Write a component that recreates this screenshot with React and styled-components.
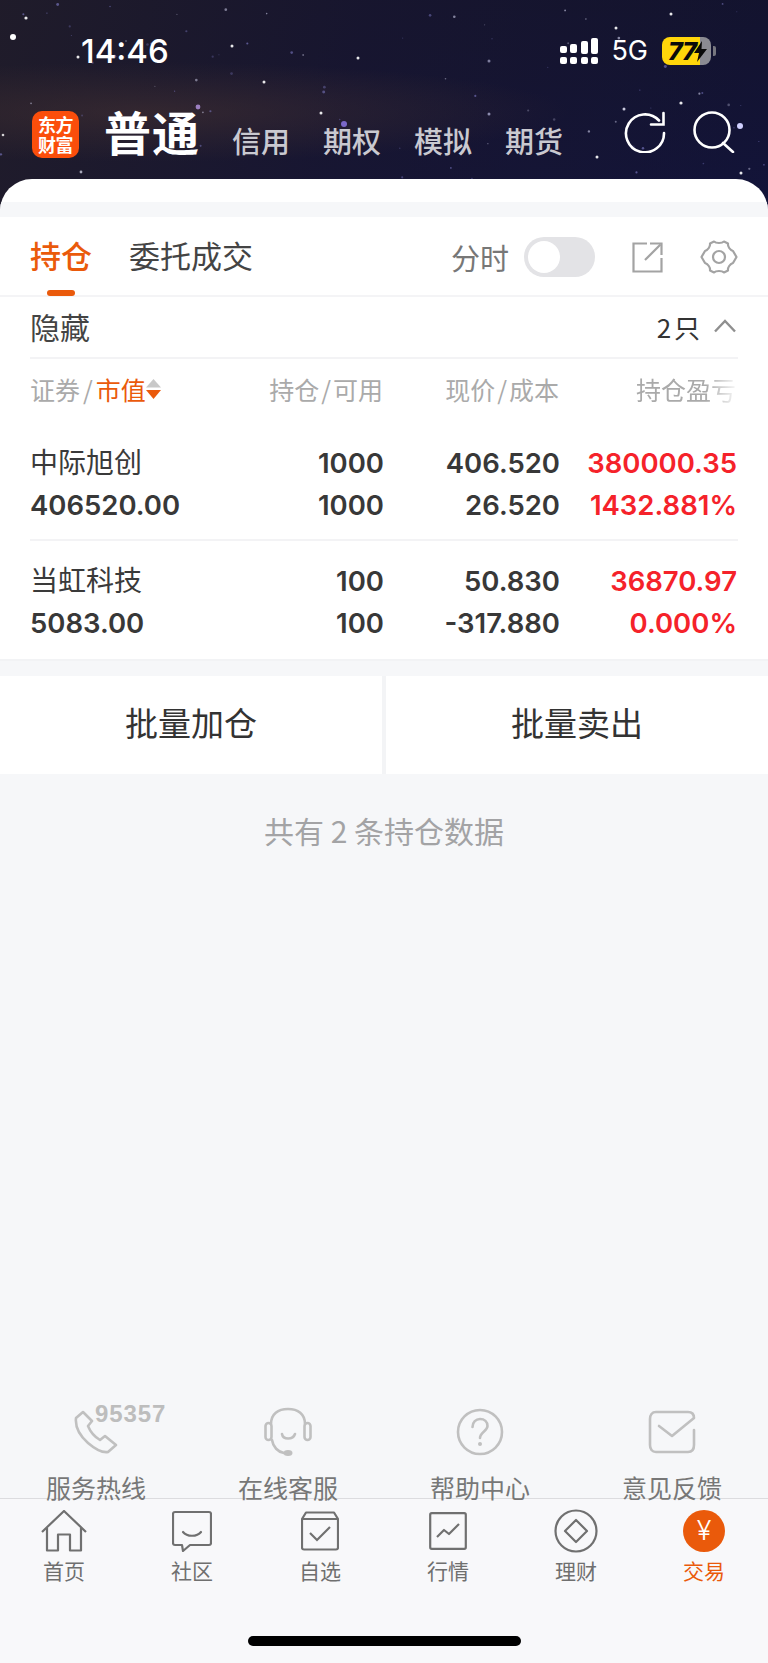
import React from 'react'
import styled, { createGlobalStyle } from 'styled-components'

const Global = createGlobalStyle`
  html, body { margin: 0; padding: 0; background: #f6f7f9; }
  body { font-family: "Noto Sans CJK SC", "Noto Sans", sans-serif; }
  * { box-sizing: border-box; }
`

const CJK = `"Noto Sans CJK SC", "Noto Sans", sans-serif`
const NUM = `Inter, ${CJK}`

// fixed star field for the header picture
const makeStars = () => {
  let seed = 46
  const rnd = () => {
    seed = (seed * 16807) % 2147483647
    return seed / 2147483647
  }
  const list = []
  for (let i = 0; i < 80; i++) {
    const lilac = rnd() > 0.35
    list.push({
      x: rnd() * 768,
      y: rnd() * 180,
      r: 0.5 + rnd() * 1,
      c: lilac ? '#7f7cc8' : '#c8c8e4',
      o: 0.25 + rnd() * 0.4,
    })
  }
  return list
}
const stars = [
  ...makeStars(),
  { x: 13, y: 37, r: 3, c: '#fff', o: 1 },
  { x: 26, y: 18, r: 1.6, c: '#fff', o: 0.9 },
  { x: 78, y: 57, r: 1.5, c: '#fff', o: 0.9 },
  { x: 232, y: 46, r: 1.5, c: '#fff', o: 0.9 },
  { x: 264, y: 82, r: 1.5, c: '#fff', o: 0.9 },
  { x: 358, y: 58, r: 1.5, c: '#fff', o: 0.9 },
  { x: 321, y: 113, r: 1.5, c: '#fff', o: 0.9 },
  { x: 198, y: 107, r: 2.4, c: '#a78ad0', o: 0.9 },
  { x: 344, y: 124, r: 3, c: '#8470d8', o: 0.9 },
  { x: 81, y: 172, r: 1.4, c: '#ccd', o: 0.8 },
  { x: 3, y: 135, r: 1.3, c: '#fff', o: 0.8 },
  { x: 671, y: 14, r: 1.5, c: '#fff', o: 0.9 },
  { x: 616, y: 28, r: 1.5, c: '#fff', o: 0.9 },
  { x: 681, y: 103, r: 1.6, c: '#fff', o: 0.9 },
  { x: 624, y: 109, r: 1.5, c: '#dde', o: 0.9 },
  { x: 740, y: 126, r: 3, c: '#d0d0ff', o: 1 },
  { x: 597, y: 157, r: 1.5, c: '#fff', o: 0.9 },
  { x: 741, y: 173, r: 1.5, c: '#fff', o: 0.9 },
  { x: 489, y: 61, r: 1.5, c: '#88a', o: 0.9 },
  { x: 489, y: 114, r: 1.5, c: '#99b', o: 0.9 },
]

const Page = styled.div`
  position: relative;
  width: 768px;
  height: 1663px;
  overflow: hidden;
  display: flex;
  flex-direction: column;
  background: #f6f7f9;
`

const Header = styled.header`
  position: relative;
  height: 209px;
  flex: none;
  overflow: hidden;
  background:
    radial-gradient(ellipse 420px 50px at 150px 112px, rgba(70, 50, 50, 0.55), transparent),
    linear-gradient(100deg, rgba(32, 28, 42, 0.95) 0%, rgba(24, 22, 48, 0.7) 45%, rgba(13, 17, 58, 0.3) 100%),
    linear-gradient(180deg, #15142a 0%, #15153a 100%);
`

const StarField = styled.svg`
  position: absolute;
  left: 0;
  top: 0;
`

const StatusBar = styled.div`
  position: relative;
  height: 104px;
  padding: 32px 52px 0 81px;
  display: flex;
  justify-content: space-between;
  align-items: flex-start;
  color: #fff;
`

const Clock = styled.span`
  font-family: ${NUM};
  font-size: 33px;
  font-weight: 500;
  line-height: 38px;
`

const StatusRight = styled.div`
  display: flex;
  align-items: center;
  height: 38px;
`

const Net = styled.span`
  font-family: ${NUM};
  font-size: 27px;
  line-height: 38px;
  margin: 0 14px 0 13px;
`

const Battery = styled.div`
  position: relative;
  width: 49px;
  height: 28px;
  border-radius: 8px;
  overflow: hidden;
  background: linear-gradient(90deg, #ffd60a 0 78%, #8b8b92 78% 100%);
  color: #0a0a0a;
  font-family: ${NUM};
  font-size: 25px;
  font-weight: 800;
  font-style: italic;
  line-height: 28px;
  padding-left: 6px;
  letter-spacing: -1px;
`

const Bolt = styled.svg`
  position: absolute;
  right: 4px;
  top: 4px;
`

const Nub = styled.div`
  width: 3px;
  height: 10px;
  margin-left: 2px;
  border-radius: 0 2px 2px 0;
  background: #77777f;
`

const NavBar = styled.div`
  position: relative;
  display: flex;
  align-items: flex-end;
  padding-left: 32px;
  height: 54px;
`

const Logo = styled.div`
  width: 47px;
  height: 47px;
  margin: 0 25px 0 0;
  border-radius: 10px;
  background: #fb4e0b;
  color: #fff;
  font-size: 18px;
  font-weight: 700;
  line-height: 20px;
  text-align: center;
  padding-top: 3px;
  letter-spacing: -0.5px;
`

const Mode = styled.span`
  color: #fff;
  font-size: 47px;
  font-weight: 700;
  line-height: 54px;
  letter-spacing: 1px;
  margin-right: 32px;
`

const NavLink = styled.span`
  color: #c9c9d0;
  font-size: 29px;
  font-weight: 500;
  line-height: 40px;
  margin-right: 33px;
  margin-bottom: -2px;
`

const NavIcons = styled.div`
  position: absolute;
  right: 33px;
  top: 7px;
  display: flex;
  gap: 27px;
`

const Card = styled.main`
  position: relative;
  flex: 1;
  margin-top: -30px;
  border-radius: 32px 32px 0 0;
  padding-top: 23px;
  background: #fff;
  display: flex;
  flex-direction: column;
  overflow: hidden;
`

const Gap = styled.div`
  flex: none;
  height: ${(p) => p.$h}px;
  background: #f6f7f9;
`

const TabBar = styled.div`
  flex: none;
  height: 80px;
  padding: 0 30px;
  background: #fff;
  border-bottom: 2px solid #f4f4f6;
  display: flex;
  align-items: center;
`

const TopTab = styled.span`
  position: relative;
  font-size: 31px;
  line-height: 40px;
  margin: 0 37px 3px 0;
  font-weight: ${(p) => (p.$on ? 500 : 400)};
  color: ${(p) => (p.$on ? '#ea5a0b' : '#444')};

  ${(p) =>
    p.$on &&
    `&::after {
      content: '';
      position: absolute;
      left: 17px;
      bottom: -21px;
      width: 28px;
      height: 6px;
      border-radius: 3px;
      background: #ea5a0b;
    }`}
`

const TabTools = styled.div`
  margin-left: auto;
  padding-top: 2px;
  display: flex;
  align-items: center;
`

const ToolLabel = styled.span`
  font-size: 29px;
  line-height: 40px;
  color: #777;
`

const Toggle = styled.div`
  width: 71px;
  height: 40px;
  margin: 0 37px 0 15px;
  padding: 4px;
  border-radius: 20px;
  background: #e3e3e6;
`

const Knob = styled.div`
  width: 32px;
  height: 32px;
  border-radius: 50%;
  background: #fff;
`

const ToolIcons = styled.div`
  display: flex;
  align-items: center;
  gap: 37px;
`

const Holdings = styled.section`
  flex: none;
  padding: 0 30px;
  background: #fff;
  border-bottom: 2px solid #f2f3f5;
`

const Fold = styled.div`
  height: 62px;
  padding-bottom: 2px;
  display: flex;
  align-items: center;
  justify-content: space-between;
  border-bottom: 2px solid #f3f3f5;
  font-size: 30px;
  color: #444;
`

const FoldRight = styled.div`
  display: flex;
  align-items: center;
  gap: 14px;
  font-size: 26px;
  word-spacing: -3px;
  color: #333;
  padding-right: 2px;
`

const Grid = styled.div`
  display: grid;
  grid-template-columns: 200px 153px 176px 177px;
  align-items: center;
`

const ColHead = styled(Grid)`
  height: 66px;
  padding-bottom: 6px;
  font-size: 25px;
  color: #aaa;
`

const ColCell = styled.div`
  display: flex;
  align-items: center;
  white-space: nowrap;
  justify-content: ${(p) => (p.$first ? 'flex-start' : 'flex-end')};
`

const Fade = styled.span`
  -webkit-mask-image: linear-gradient(90deg, #000 70%, rgba(0, 0, 0, 0.1) 100%);
  mask-image: linear-gradient(90deg, #000 70%, rgba(0, 0, 0, 0.1) 100%);
`

const Slash = styled.span`
  margin: 0 ${(p) => (p.$tight ? 2 : 3)}px;
`

const Sorted = styled.span`
  color: #ea5a0b;
`

const Row = styled(Grid)`
  grid-template-columns: 201px 153px 176px 177px;
  height: ${(p) => (p.$last ? 118 : 116)}px;
  padding-top: ${(p) => (p.$last ? 19 : 17)}px;
  align-content: start;
  row-gap: 0;
  border-bottom: ${(p) => (p.$last ? 'none' : '2px solid #f3f3f5')};
`

const Cell = styled.div`
  font-family: ${NUM};
  font-size: 27.5px;
  font-weight: 600;
  line-height: 42px;
  text-align: ${(p) => (p.$first ? 'left' : 'right')};
  color: ${(p) => (p.$red ? '#f5222a' : '#383838')};
`

const StockName = styled.div`
  font-size: 28px;
  line-height: 38px;
  margin-bottom: 4px;
  color: #3a3a3a;
`

const Batch = styled.div`
  flex: none;
  height: 98px;
  display: grid;
  grid-template-columns: 382px 382px;
  column-gap: 4px;
  background: #f3f4f6;
`

const BatchButton = styled.div`
  background: #fff;
  padding-bottom: 6px;
  display: flex;
  align-items: center;
  justify-content: center;
  font-size: 33px;
  color: #333;
`

const Summary = styled.div`
  flex: 1;
  background: #f6f7f9;
  padding-top: 34px;
  text-align: center;
  font-size: 30px;
  line-height: 44px;
  color: #a3a3a5;
`

const HelpRow = styled.div`
  flex: none;
  height: 100px;
  display: grid;
  grid-template-columns: repeat(4, 1fr);
  background: #f6f7f9;
`

const HelpItem = styled.div`
  position: relative;
  height: 100px;
  display: flex;
  flex-direction: column;
  align-items: center;
  padding-top: 8px;
`

const HelpIcon = styled.div`
  flex: none;
  height: 52px;
  display: flex;
  align-items: center;
  justify-content: center;
`

const HelpLabel = styled.span`
  flex: none;
  margin-top: 18px;
  font-size: 25px;
  line-height: 22px;
  color: #777;
`

const Hotline = styled.span`
  position: absolute;
  left: 95px;
  top: 4px;
  font-family: "Liberation Sans", sans-serif;
  font-size: 24px;
  font-weight: 700;
  line-height: 24px;
  letter-spacing: 0.9px;
  color: #bdbdbd;
`

const BottomNav = styled.nav`
  flex: none;
  height: 165px;
  background: #f8f8fa;
  border-top: 1px solid #dcdcdf;
  display: grid;
  grid-template-columns: repeat(6, 1fr);
  align-content: start;
  padding-top: 9px;
`

const NavItem = styled.div`
  display: flex;
  flex-direction: column;
  align-items: center;
  font-size: 21px;
  line-height: 28px;
  color: ${(p) => (p.$on ? '#ea5a0b' : '#6f6f6f')};
`

const NavIcon = styled.div`
  height: 46px;
  margin-bottom: 2px;
  display: flex;
  align-items: center;
  justify-content: center;
`

const HomeBar = styled.div`
  position: absolute;
  left: 248px;
  bottom: 17px;
  width: 273px;
  height: 10px;
  border-radius: 5px;
  background: #000;
`

const Coin = styled.div`
  width: 42px;
  height: 42px;
  border-radius: 50%;
  background: #ea5a0b;
  color: #fff;
  font-family: ${NUM};
  font-size: 27px;
  font-weight: 300;
  line-height: 42px;
  text-align: center;
`

const Signal = () => (
  <svg width="38" height="28" viewBox="0 0 38 28" fill="#fff">
    <rect x="0" y="20" width="7" height="7" rx="2" />
    <rect x="10" y="20" width="7" height="7" rx="2" />
    <rect x="21" y="20" width="7" height="7" rx="2" />
    <rect x="31" y="20" width="7" height="7" rx="2" />
    <rect x="0" y="9" width="7" height="7" rx="2" />
    <rect x="10" y="7" width="7" height="9" rx="2" />
    <rect x="21" y="4" width="7" height="13" rx="2" />
    <rect x="31" y="1" width="7" height="16" rx="2" />
  </svg>
)

const RefreshIcon = () => (
  <svg width="42" height="42" viewBox="0 0 42 42" fill="none" stroke="#fff" strokeWidth="2.6" strokeLinecap="round">
    <path d="M35 9.5A19 19 0 1 0 40 22" />
    <path d="M27 13.5H39.5V2" strokeLinejoin="miter" />
  </svg>
)

const SearchIcon = () => (
  <svg width="42" height="42" viewBox="0 0 42 42" fill="none" stroke="#fff" strokeWidth="2.6" strokeLinecap="round">
    <circle cx="19" cy="19" r="17.5" />
    <path d="M30 32L40 41" />
  </svg>
)

const ShareIcon = () => (
  <svg width="31" height="31" viewBox="0 0 31 31" fill="none" stroke="#a3a3a3" strokeWidth="2.2">
    <path d="M15 1.5H1.5V29.5H29.5V16" />
    <path d="M13 18L28.5 2.5" />
    <path d="M18 1.5H29.5V13" />
  </svg>
)

const GearIcon = () => (
  <svg width="38" height="38" viewBox="0 0 38 38" fill="none" stroke="#a3a3a3" strokeWidth="2.2" strokeLinejoin="round">
    <path d="M14 3.5C16 5.5 22 5.5 24 3.5L28 5.5C27.5 8.5 30 12 33 13L36.5 19L33 25C30 26 27.5 29.5 28 32.5L24 34.5C22 32.5 16 32.5 14 34.5L10 32.5C10.5 29.5 8 26 5 25L1.5 19L5 13C8 12 10.5 8.5 10 5.5Z" />
    <circle cx="19" cy="19" r="6" />
  </svg>
)

const Chevron = () => (
  <svg width="22" height="14" viewBox="0 0 22 14" fill="none" stroke="#8f8f8f" strokeWidth="2.4">
    <path d="M1 12.5L11 2L21 12.5" />
  </svg>
)

const SortArrows = () => (
  <svg width="15" height="20" viewBox="0 0 15 20">
    <path d="M7.5 0L15 8.5H0Z" fill="#c8c8c8" />
    <path d="M0 11H15L7.5 20Z" fill="#ea5a0b" />
  </svg>
)

const PhoneIcon = () => (
  <svg width="44" height="44" viewBox="0 0 44 44" fill="none" stroke="#c0c0c0" strokeWidth="2.6" strokeLinejoin="round">
    <path d="M9 2L2 8C1 17 6 26 14 33C21 39 28 43 34 42L42 35L31 26L26 30C21 27 16 21 14 16L18 11Z" />
  </svg>
)

const HeadsetIcon = () => (
  <svg width="48" height="50" viewBox="0 0 48 50" fill="none" stroke="#c0c0c0" strokeWidth="2.6" strokeLinecap="round">
    <path d="M7 17C7 7 14 2 24 2C34 2 41 7 41 17" />
    <rect x="1.5" y="16" width="6" height="17" rx="3" />
    <rect x="40.5" y="16" width="6" height="17" rx="3" />
    <path d="M8 33C9 40 14 45 20 46" />
    <path d="M18 27C19 33 29 33 31 27" />
    <ellipse cx="24" cy="46" rx="4.5" ry="3" fill="#c0c0c0" stroke="none" />
  </svg>
)

const HelpCircleIcon = () => (
  <svg width="48" height="48" viewBox="0 0 48 48" fill="none" stroke="#c0c0c0" strokeWidth="2.6" strokeLinecap="round">
    <circle cx="24" cy="24" r="22" />
    <path d="M16.5 19C16.5 14 20 11 24 11C28.5 11 31.5 14 31.5 18C31.5 23 24 24 24 30" />
    <circle cx="24" cy="36" r="2" fill="#c0c0c0" stroke="none" />
  </svg>
)

const MailIcon = () => (
  <svg width="48" height="44" viewBox="0 0 48 44" fill="none" stroke="#c0c0c0" strokeWidth="2.6" strokeLinecap="round" strokeLinejoin="round">
    <path d="M46 20V35C46 39 44 42 40 42H8C4 42 2 39 2 35V9C2 5 4 2 8 2H40C44 2 46 4 46 8L24 26L11 16" />
  </svg>
)

const HomeIcon = () => (
  <svg width="46" height="42" viewBox="0 0 46 42" fill="none" stroke="#707070" strokeWidth="2.2" strokeLinejoin="round">
    <path d="M1 22L23 1L45 22" />
    <path d="M6 18V40.5H17V24.5H29V40.5H40V18" />
  </svg>
)

const ChatIcon = () => (
  <svg width="40" height="42" viewBox="0 0 40 42" fill="none" stroke="#707070" strokeWidth="2.2" strokeLinejoin="round" strokeLinecap="round">
    <path d="M3 2H37C38 2 39 3 39 4V33C39 34 38 35 37 35H18L11 41L10 35H3C2 35 1 34 1 33V4C1 3 2 2 3 2Z" />
    <path d="M11 22C15 27 25 27 29 22" />
  </svg>
)

const WatchIcon = () => (
  <svg width="38" height="40" viewBox="0 0 38 40" fill="none" stroke="#707070" strokeWidth="2.2" strokeLinejoin="round">
    <path d="M3 38.5H35C36 38.5 37 37.5 37 36.5V8L33 1.5H5L1 8V36.5C1 37.5 2 38.5 3 38.5Z" />
    <path d="M1 8H37" />
    <path d="M9 22L16 29L29 16" strokeLinejoin="miter" />
  </svg>
)

const ChartIcon = () => (
  <svg width="38" height="38" viewBox="0 0 38 38" fill="none" stroke="#707070" strokeWidth="2.2" strokeLinejoin="round">
    <rect x="1.2" y="1.2" width="35.6" height="35.6" rx="1.5" />
    <path d="M8 25L15 18L20 22L30 12" />
  </svg>
)

const WealthIcon = () => (
  <svg width="44" height="44" viewBox="0 0 44 44" fill="none" stroke="#707070" strokeWidth="2.2" strokeLinejoin="round">
    <circle cx="22" cy="22" r="20.5" />
    <path d="M22 11L33 22L22 33L11 22Z" />
  </svg>
)

const rows = [
  { name: '中际旭创', value: '406520.00', hold: '1000', free: '1000', price: '406.520', cost: '26.520', gain: '380000.35', pct: '1432.881%' },
  { name: '当虹科技', value: '5083.00', hold: '100', free: '100', price: '50.830', cost: '-317.880', gain: '36870.97', pct: '0.000%' },
]

const helpLinks = [
  { label: '服务热线', icon: <PhoneIcon />, hotline: '95357' },
  { label: '在线客服', icon: <HeadsetIcon /> },
  { label: '帮助中心', icon: <HelpCircleIcon /> },
  { label: '意见反馈', icon: <MailIcon /> },
]

const navItems = [
  { label: '首页', icon: <HomeIcon /> },
  { label: '社区', icon: <ChatIcon /> },
  { label: '自选', icon: <WatchIcon /> },
  { label: '行情', icon: <ChartIcon /> },
  { label: '理财', icon: <WealthIcon /> },
  { label: '交易', icon: <Coin>¥</Coin>, on: true },
]

export default function App() {
  return (
    <Page>
      <Global />
      <Header>
        <StarField width="768" height="209" viewBox="0 0 768 209">
          {stars.map((s, i) => (
            <circle key={i} cx={s.x} cy={s.y} r={s.r} fill={s.c} opacity={s.o} />
          ))}
        </StarField>
        <StatusBar>
          <Clock>14:46</Clock>
          <StatusRight>
            <Signal />
            <Net>5G</Net>
            <Battery>
              77
              <Bolt width="13" height="21" viewBox="0 0 13 21">
                <path d="M8 0L0 12H5L3 21L13 8H7.5Z" fill="#0a0a0a" />
              </Bolt>
            </Battery>
            <Nub />
          </StatusRight>
        </StatusBar>
        <NavBar>
          <Logo>东方<br />财富</Logo>
          <Mode>普通</Mode>
          <NavLink>信用</NavLink>
          <NavLink>期权</NavLink>
          <NavLink>模拟</NavLink>
          <NavLink>期货</NavLink>
          <NavIcons>
            <RefreshIcon />
            <SearchIcon />
          </NavIcons>
        </NavBar>
      </Header>

      <Card>
        <Gap $h={15} />
        <TabBar>
          <TopTab $on>持仓</TopTab>
          <TopTab>委托成交</TopTab>
          <TabTools>
            <ToolLabel>分时</ToolLabel>
            <Toggle><Knob /></Toggle>
            <ToolIcons>
              <ShareIcon />
              <GearIcon />
            </ToolIcons>
          </TabTools>
        </TabBar>

        <Holdings>
          <Fold>
            <span>隐藏</span>
            <FoldRight>
              <span>2 只</span>
              <Chevron />
            </FoldRight>
          </Fold>
          <ColHead>
            <ColCell $first>
              证券<Slash>/</Slash><Sorted>市值</Sorted><SortArrows />
            </ColCell>
            <ColCell>持仓<Slash $tight>/</Slash>可用</ColCell>
            <ColCell>现价<Slash $tight>/</Slash>成本</ColCell>
            <ColCell><Fade>持仓盈亏</Fade></ColCell>
          </ColHead>
          {rows.map((r, i) => (
            <Row key={r.name} $last={i === rows.length - 1}>
              <StockName>{r.name}</StockName>
              <Cell>{r.hold}</Cell>
              <Cell>{r.price}</Cell>
              <Cell $red>{r.gain}</Cell>
              <Cell $first>{r.value}</Cell>
              <Cell>{r.free}</Cell>
              <Cell>{r.cost}</Cell>
              <Cell $red>{r.pct}</Cell>
            </Row>
          ))}
        </Holdings>

        <Gap $h={15} />
        <Batch>
          <BatchButton>批量加仓</BatchButton>
          <BatchButton>批量卖出</BatchButton>
        </Batch>
        <Summary>共有 2 条持仓数据</Summary>

        <HelpRow>
          {helpLinks.map((h) => (
            <HelpItem key={h.label}>
              {h.hotline && <Hotline>{h.hotline}</Hotline>}
              <HelpIcon>{h.icon}</HelpIcon>
              <HelpLabel>{h.label}</HelpLabel>
            </HelpItem>
          ))}
        </HelpRow>

        <BottomNav>
          {navItems.map((n) => (
            <NavItem key={n.label} $on={n.on}>
              <NavIcon>{n.icon}</NavIcon>
              {n.label}
            </NavItem>
          ))}
        </BottomNav>
      </Card>
      <HomeBar />
    </Page>
  )
}
